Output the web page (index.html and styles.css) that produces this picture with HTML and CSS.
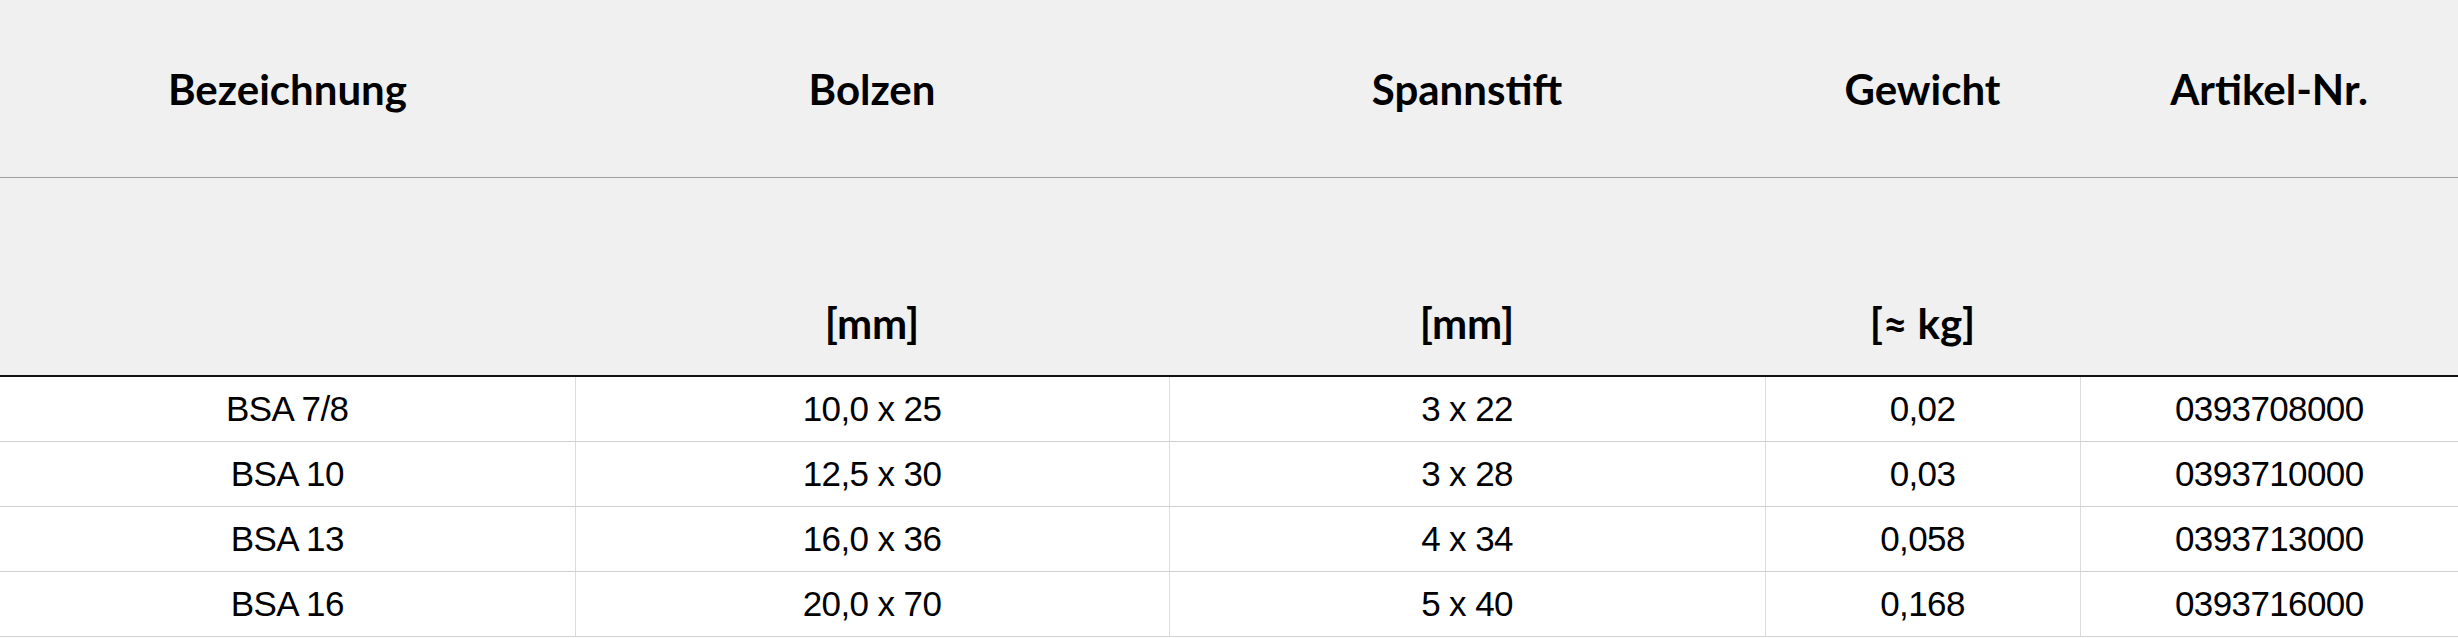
FILE: index.html
```html
<!DOCTYPE html>
<html lang="de">
<head>
<meta charset="utf-8">
<title>Bolzen Tabelle</title>
<link rel="stylesheet" href="styles.css">
</head>
<body>
<table class="spec-table">
  <colgroup>
    <col class="col-name">
    <col class="col-bolzen">
    <col class="col-stift">
    <col class="col-gewicht">
    <col class="col-artikel">
  </colgroup>
  <thead>
    <tr class="head-title">
      <th>Bezeichnung</th>
      <th>Bolzen</th>
      <th>Spannstift</th>
      <th>Gewicht</th>
      <th>Artikel-Nr.</th>
    </tr>
    <tr class="head-unit">
      <th></th>
      <th>[mm]</th>
      <th>[mm]</th>
      <th>[≈ kg]</th>
      <th></th>
    </tr>
  </thead>
  <tbody>
    <tr>
      <td>BSA 7/8</td>
      <td>10,0 x 25</td>
      <td>3 x 22</td>
      <td>0,02</td>
      <td>0393708000</td>
    </tr>
    <tr>
      <td>BSA 10</td>
      <td>12,5 x 30</td>
      <td>3 x 28</td>
      <td>0,03</td>
      <td>0393710000</td>
    </tr>
    <tr>
      <td>BSA 13</td>
      <td>16,0 x 36</td>
      <td>4 x 34</td>
      <td>0,058</td>
      <td>0393713000</td>
    </tr>
    <tr>
      <td>BSA 16</td>
      <td>20,0 x 70</td>
      <td>5 x 40</td>
      <td>0,168</td>
      <td>0393716000</td>
    </tr>
  </tbody>
</table>
</body>
</html>
```

FILE: styles.css
```css
html, body {
  margin: 0;
  padding: 0;
  background: #ffffff;
}

.spec-table {
  width: 2458px;
  table-layout: fixed;
  border-collapse: collapse;
  border-spacing: 0;
  color: #000;
}

.col-name { width: 575px; }
.col-bolzen { width: 594px; }
.col-stift { width: 596px; }
.col-gewicht { width: 315px; }
.col-artikel { width: 378px; }

.spec-table th {
  background: #f0f0f0;
  font-family: Lato, "Open Sans", sans-serif;
  font-weight: 700;
  font-size: 42px;
  line-height: 50px;
  text-align: center;
  padding: 0;
}

.head-title th {
  height: 177px;
  vertical-align: middle;
  border-bottom: 1px solid #a0a0a0;
}

.head-unit th {
  height: 170px;
  vertical-align: bottom;
  padding-bottom: 27px;
  border-bottom: 2px solid #111;
}

.spec-table td {
  font-family: "Liberation Sans", Arial, sans-serif;
  font-size: 35px;
  letter-spacing: -0.6px;
  line-height: 40px;
  height: 64px;
  padding: 0;
  text-align: center;
  vertical-align: middle;
  border-bottom: 1px solid #d0d0d0;
  border-left: 1px solid #dcdcdc;
}

.spec-table td:first-child {
  border-left: none;
}
```
